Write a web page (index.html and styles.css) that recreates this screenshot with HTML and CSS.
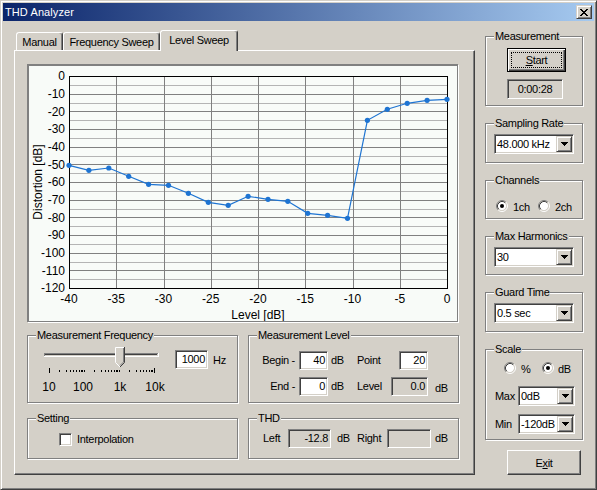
FILE: index.html
```html
<!DOCTYPE html>
<html>
<head>
<meta charset="utf-8">
<title>THD Analyzer</title>
<link rel="stylesheet" href="styles.css">
</head>
<body>
<div class="window">
  <div class="titlebar">
    <span class="title">THD Analyzer</span>
    <span class="close"><svg width="8" height="7" viewBox="0 0 8 7"><path d="M0 0h2v1h-2zM6 0h2v1h-2zM1 1h2v1h-2zM5 1h2v1h-2zM2 2h4v1h-4zM3 3h2v1h-2zM2 4h4v1h-4zM1 5h2v1h-2zM5 5h2v1h-2zM0 6h2v1h-2zM6 6h2v1h-2z" fill="#000"/></svg></span>
  </div>
  <div class="client">
    <div class="tabctl">
      <div class="tabstrip">
        <div class="tab tab-manual">Manual</div>
        <div class="tab tab-freq">Frequency Sweep</div>
        <div class="tab tab-level">Level Sweep</div>
      </div>
      <div class="panel">
        <div class="chart">
          <svg class="plot" width="428" height="255" viewBox="0 0 428 255">
            <g stroke="#b4b4b4" stroke-width="1">
              <path d="M40 19.5H418M40 37.5H418M40 54.5H418M40 72.5H418M40 90.5H418M40 107.5H418M40 125.5H418M40 143.5H418M40 160.5H418M40 178.5H418M40 196.5H418M40 213.5H418"/>
            </g>
            <g stroke="#808080" stroke-width="1">
              <path d="M40 28.5H418M40 45.5H418M40 63.5H418M40 81.5H418M40 98.5H418M40 116.5H418M40 134.5H418M40 151.5H418M40 169.5H418M40 187.5H418M40 204.5H418"/>
              <path d="M87.5 10V222M135.5 10V222M182.5 10V222M229.5 10V222M276.5 10V222M324.5 10V222M371.5 10V222"/>
            </g>
            <rect x="40.5" y="10.5" width="378" height="212" fill="none" stroke="#000"/>
            <polyline fill="none" stroke="#1e74d2" stroke-width="1.2" points="40,99.3 59.9,104.3 79.8,102 99.7,110.3 119.6,118.3 139.5,119.3 159.4,127.3 179.3,136.3 199.2,139.3 219.1,130.3 239,133.3 258.8,135.3 278.7,147.3 298.6,149.3 318.5,152.3 338.4,54.3 358.3,43.3 378.2,37.3 398.1,34.3 418,33.3"/>
            <g fill="#1e74d2">
              <circle cx="40" cy="99.3" r="2.6"/><circle cx="59.9" cy="104.3" r="2.6"/><circle cx="79.8" cy="102" r="2.6"/><circle cx="99.7" cy="110.3" r="2.6"/><circle cx="119.6" cy="118.3" r="2.6"/><circle cx="139.5" cy="119.3" r="2.6"/><circle cx="159.4" cy="127.3" r="2.6"/><circle cx="179.3" cy="136.3" r="2.6"/><circle cx="199.2" cy="139.3" r="2.6"/><circle cx="219.1" cy="130.3" r="2.6"/><circle cx="239" cy="133.3" r="2.6"/><circle cx="258.8" cy="135.3" r="2.6"/><circle cx="278.7" cy="147.3" r="2.6"/><circle cx="298.6" cy="149.3" r="2.6"/><circle cx="318.5" cy="152.3" r="2.6"/><circle cx="338.4" cy="54.3" r="2.6"/><circle cx="358.3" cy="43.3" r="2.6"/><circle cx="378.2" cy="37.3" r="2.6"/><circle cx="398.1" cy="34.3" r="2.6"/><circle cx="418" cy="33.3" r="2.6"/>
            </g>
            <g class="ax" text-anchor="end">
              <text x="36" y="14.3">0</text>
              <text x="36" y="32">-10</text>
              <text x="36" y="49.6">-20</text>
              <text x="36" y="67.3">-30</text>
              <text x="36" y="85">-40</text>
              <text x="36" y="102.6">-50</text>
              <text x="36" y="120.3">-60</text>
              <text x="36" y="138">-70</text>
              <text x="36" y="155.6">-80</text>
              <text x="36" y="173.3">-90</text>
              <text x="36" y="191">-100</text>
              <text x="36" y="208.6">-110</text>
              <text x="36" y="226.3">-120</text>
            </g>
            <g class="ax" text-anchor="middle">
              <text x="40" y="237">-40</text>
              <text x="87.25" y="237">-35</text>
              <text x="134.5" y="237">-30</text>
              <text x="181.75" y="237">-25</text>
              <text x="229" y="237">-20</text>
              <text x="276.25" y="237">-15</text>
              <text x="323.5" y="237">-10</text>
              <text x="370.75" y="237">-5</text>
              <text x="418" y="237">0</text>
              <text x="229" y="253">Level [dB]</text>
              <text transform="translate(12.5 116) rotate(-90)">Distortion [dB]</text>
            </g>
          </svg>
        </div>
        <div class="row row-a">
          <div class="group g-mf">
            <div class="gt">Measurement Frequency</div>
            <div class="mf-body">
              <svg class="slider" width="130" height="50" viewBox="0 0 130 50">
                <rect x="4" y="9" width="114" height="1" fill="#808080"/>
                <rect x="4" y="9" width="1" height="4" fill="#808080"/>
                <rect x="5" y="10" width="112" height="1" fill="#404040"/>
                <rect x="4" y="12" width="115" height="1" fill="#fff"/>
                <rect x="118" y="9" width="1" height="4" fill="#fff"/>
                <g fill="#000">
                  <rect x="9" y="24" width="1" height="5"/><rect x="19" y="26" width="1" height="2"/><rect x="26" y="26" width="1" height="2"/><rect x="30" y="26" width="1" height="2"/><rect x="33" y="26" width="1" height="2"/><rect x="36" y="26" width="1" height="2"/><rect x="39" y="26" width="1" height="2"/><rect x="41" y="26" width="1" height="2"/><rect x="42" y="26" width="1" height="2"/>
                  <rect x="44" y="26" width="1" height="2"/><rect x="54" y="26" width="1" height="2"/><rect x="61" y="26" width="1" height="2"/><rect x="65" y="26" width="1" height="2"/><rect x="68" y="26" width="1" height="2"/><rect x="71" y="26" width="1" height="2"/><rect x="74" y="26" width="1" height="2"/><rect x="76" y="26" width="1" height="2"/><rect x="77" y="26" width="1" height="2"/>
                  <rect x="79" y="26" width="1" height="2"/><rect x="89" y="26" width="1" height="2"/><rect x="96" y="26" width="1" height="2"/><rect x="100" y="26" width="1" height="2"/><rect x="103" y="26" width="1" height="2"/><rect x="106" y="26" width="1" height="2"/><rect x="109" y="26" width="1" height="2"/><rect x="111" y="26" width="1" height="2"/><rect x="112" y="26" width="1" height="2"/>
                  <rect x="114" y="24" width="1" height="5"/>
                </g>
                <polygon points="75,3 85,3 85,18 80,23 75,18" fill="#d4d0c8"/>
                <polyline points="75.5,18.5 75.5,3.5 84.5,3.5" fill="none" stroke="#fff"/>
                <polyline points="75.5,18.5 80,23" fill="none" stroke="#fff"/>
                <polyline points="84.5,3 84.5,18.5 80,23" fill="none" stroke="#404040"/>
                <polyline points="83.5,4 83.5,18 80,21.5" fill="none" stroke="#808080"/>
                <g class="sl-lbl" text-anchor="middle">
                  <text x="9" y="47">10</text>
                  <text x="43" y="47">100</text>
                  <text x="80" y="47">1k</text>
                  <text x="115" y="47">10k</text>
                </g>
              </svg>
              <div class="edit edit-freq">1000</div>
              <div class="hz">Hz</div>
            </div>
          </div>
          <div class="group g-ml">
            <div class="gt">Measurement Level</div>
            <div class="ml-grid">
              <div class="lbl-r">Begin -</div>
              <div class="edit w29">40</div>
              <div class="unit">dB</div>
              <div>Point</div>
              <div class="edit w29 end">20</div>
              <div></div>
              <div class="lbl-r">End -</div>
              <div class="edit w29">0</div>
              <div class="unit">dB</div>
              <div>Level</div>
              <div class="edit ro w37">0.0</div>
              <div class="db-low">dB</div>
            </div>
          </div>
        </div>
        <div class="row row-b">
          <div class="group g-set">
            <div class="gt">Setting</div>
            <div class="set-body">
              <div class="check"></div>
              <span class="chk-lbl">Interpolation</span>
            </div>
          </div>
          <div class="group g-thd">
            <div class="gt">THD</div>
            <div class="thd-body">
              <span class="t-left">Left</span>
              <div class="edit ro w43">-12.8</div>
              <span class="t-db1">dB</span>
              <span class="t-right">Right</span>
              <div class="edit ro w44"></div>
              <span class="t-db2">dB</span>
            </div>
          </div>
        </div>
      </div>
    </div>
    <div class="side">
      <div class="group g-meas">
        <div class="gt">Measurement</div>
        <div class="btn btn-start"><span class="focus"><span><u>S</u>tart</span></span></div>
        <div class="edit ro time">0:00:28</div>
      </div>
      <div class="group g-samp">
        <div class="gt">Sampling Rate</div>
        <div class="combo combo-wide"><span class="val">48.000 kHz</span><span class="dd"><svg width="7" height="4" viewBox="0 0 7 4"><path d="M0 0h7v1h-1v1h-1v1h-1v1h-1v-1h-1v-1h-1v-1h-1z" fill="#000"/></svg></span></div>
      </div>
      <div class="group g-chan">
        <div class="gt">Channels</div>
        <div class="radios radios-chan">
          <svg class="radio" width="12" height="12" viewBox="0 0 12 12"><circle cx="6" cy="6" r="4.2" fill="#fff"/><path d="M2.11 9.89A5.5 5.5 0 0 1 9.89 2.11" fill="none" stroke="#808080"/><path d="M9.89 2.11A5.5 5.5 0 0 1 2.11 9.89" fill="none" stroke="#fff"/><path d="M2.82 9.18A4.5 4.5 0 0 1 9.18 2.82" fill="none" stroke="#404040"/><path d="M9.18 2.82A4.5 4.5 0 0 1 2.82 9.18" fill="none" stroke="#d4d0c8"/><circle cx="6" cy="6" r="2" fill="#000"/></svg>
          <span class="rl rl-1ch">1ch</span>
          <svg class="radio" width="12" height="12" viewBox="0 0 12 12"><circle cx="6" cy="6" r="4.2" fill="#fff"/><path d="M2.11 9.89A5.5 5.5 0 0 1 9.89 2.11" fill="none" stroke="#808080"/><path d="M9.89 2.11A5.5 5.5 0 0 1 2.11 9.89" fill="none" stroke="#fff"/><path d="M2.82 9.18A4.5 4.5 0 0 1 9.18 2.82" fill="none" stroke="#404040"/><path d="M9.18 2.82A4.5 4.5 0 0 1 2.82 9.18" fill="none" stroke="#d4d0c8"/></svg>
          <span class="rl rl-2ch">2ch</span>
        </div>
      </div>
      <div class="group g-maxh">
        <div class="gt">Max Harmonics</div>
        <div class="combo combo-wide"><span class="val">30</span><span class="dd"><svg width="7" height="4" viewBox="0 0 7 4"><path d="M0 0h7v1h-1v1h-1v1h-1v1h-1v-1h-1v-1h-1v-1h-1z" fill="#000"/></svg></span></div>
      </div>
      <div class="group g-guard">
        <div class="gt">Guard Time</div>
        <div class="combo combo-wide"><span class="val">0.5 sec</span><span class="dd"><svg width="7" height="4" viewBox="0 0 7 4"><path d="M0 0h7v1h-1v1h-1v1h-1v1h-1v-1h-1v-1h-1v-1h-1z" fill="#000"/></svg></span></div>
      </div>
      <div class="group g-scale">
        <div class="gt">Scale</div>
        <div class="radios radios-scale">
          <svg class="radio" width="12" height="12" viewBox="0 0 12 12"><circle cx="6" cy="6" r="4.2" fill="#fff"/><path d="M2.11 9.89A5.5 5.5 0 0 1 9.89 2.11" fill="none" stroke="#808080"/><path d="M9.89 2.11A5.5 5.5 0 0 1 2.11 9.89" fill="none" stroke="#fff"/><path d="M2.82 9.18A4.5 4.5 0 0 1 9.18 2.82" fill="none" stroke="#404040"/><path d="M9.18 2.82A4.5 4.5 0 0 1 2.82 9.18" fill="none" stroke="#d4d0c8"/></svg>
          <span class="rl rl-pct">%</span>
          <svg class="radio" width="12" height="12" viewBox="0 0 12 12"><circle cx="6" cy="6" r="4.2" fill="#fff"/><path d="M2.11 9.89A5.5 5.5 0 0 1 9.89 2.11" fill="none" stroke="#808080"/><path d="M9.89 2.11A5.5 5.5 0 0 1 2.11 9.89" fill="none" stroke="#fff"/><path d="M2.82 9.18A4.5 4.5 0 0 1 9.18 2.82" fill="none" stroke="#404040"/><path d="M9.18 2.82A4.5 4.5 0 0 1 2.82 9.18" fill="none" stroke="#d4d0c8"/><circle cx="6" cy="6" r="2" fill="#000"/></svg>
          <span class="rl rl-db">dB</span>
        </div>
        <div class="srow srow-max">
          <span class="sl">Max</span>
          <div class="combo combo-sm"><span class="val">0dB</span><span class="dd"><svg width="7" height="4" viewBox="0 0 7 4"><path d="M0 0h7v1h-1v1h-1v1h-1v1h-1v-1h-1v-1h-1v-1h-1z" fill="#000"/></svg></span></div>
        </div>
        <div class="srow srow-min">
          <span class="sl">Min</span>
          <div class="combo combo-sm"><span class="val">-120dB</span><span class="dd"><svg width="7" height="4" viewBox="0 0 7 4"><path d="M0 0h7v1h-1v1h-1v1h-1v1h-1v-1h-1v-1h-1v-1h-1z" fill="#000"/></svg></span></div>
        </div>
      </div>
      <div class="btn btn-exit"><span>E<u>x</u>it</span></div>
    </div>
  </div>
</div>
</body>
</html>
```

FILE: styles.css
```css
* { box-sizing: border-box; }
html, body { margin: 0; padding: 0; }
body {
  width: 597px;
  height: 490px;
  overflow: hidden;
  background: #d4d0c8;
  font-family: "Liberation Sans", Arial, sans-serif;
  font-size: 11px;
  letter-spacing: -0.3px;
  color: #000;
}
.window {
  width: 597px;
  height: 490px;
  background: #d4d0c8;
  border: 1px solid;
  border-color: #d4d0c8 #404040 #404040 #d4d0c8;
  box-shadow: inset 1px 1px #fff, inset -1px -1px #808080;
  padding: 2px;
}
.titlebar {
  height: 18px;
  display: flex;
  align-items: center;
  padding: 0 2px;
  background: linear-gradient(to right, #0a246a, #a6caf0);
  color: #fff;
}
.title { line-height: 18px; letter-spacing: 0.1px; }
.close {
  margin-left: auto;
  width: 16px;
  height: 14px;
  background: #d4d0c8;
  border: 1px solid;
  border-color: #d4d0c8 #404040 #404040 #d4d0c8;
  box-shadow: inset 1px 1px #fff, inset -1px -1px #808080;
  display: flex;
  align-items: center;
  justify-content: center;
}
.close svg { display: block; }

.client { display: flex; padding: 9px 0 0 11px; }
.tabctl { width: 461px; }
.tabstrip {
  display: flex;
  align-items: flex-end;
  height: 20px;
  padding-left: 2px;
  position: relative;
  z-index: 1;
}
.tab {
  height: 18px;
  border: 1px solid;
  border-bottom: 0;
  border-color: #fff #404040 transparent #fff;
  box-shadow: inset -1px 0 #808080;
  border-radius: 3px 3px 0 0;
  text-align: center;
  padding-top: 3px;
  line-height: 13px;
  white-space: nowrap;
  background: #d4d0c8;
}
.tab-manual { width: 47px; }
.tab-freq { width: 97px; }
.tab-level { width: 78px; height: 21px; margin-bottom: -1px; }

.panel {
  height: 425px;
  border: 1px solid;
  border-color: #fff #404040 #404040 #fff;
  box-shadow: inset -1px -1px #808080;
  padding: 13px 0 0 12px;
}
.chart {
  width: 431px;
  height: 258px;
  border-style: solid;
  border-color: #808080;
  border-width: 2px 1px 1px 2px;
  background: #f8fbf8;
  box-shadow: 1px 1px #fff;
}
.chart svg { display: block; }
.ax text, .sl-lbl text {
  font-family: "Liberation Sans", Arial, sans-serif;
  font-size: 12px;
  letter-spacing: 0;
  fill: #000;
}

.row { display: flex; gap: 10px; }
.row-a { margin-top: 13px; }
.row-b { margin-top: 15px; }
.group {
  border: 1px solid #808080;
  box-shadow: inset 1px 1px #fff, 1px 1px #fff;
}
.gt {
  width: fit-content;
  margin: -7px 0 0 8px;
  padding: 0 1px;
  background: #d4d0c8;
  line-height: 13px;
  white-space: nowrap;
}
.g-mf, .g-ml { width: 211px; height: 68px; }
.g-set, .g-thd { width: 211px; height: 41px; }

.edit {
  height: 19px;
  background: #fff;
  border: 1px solid;
  border-color: #808080 #fff #fff #808080;
  box-shadow: inset 1px 1px #404040, inset -1px -1px #d4d0c8;
  text-align: right;
  padding: 0 2px;
  line-height: 17px;
  white-space: nowrap;
}
.edit.ro { background: #d4d0c8; }

.mf-body { display: flex; align-items: flex-start; padding: 2px 0 0 12px; }
.slider { display: block; }
.edit-freq { width: 33px; margin: 6px 0 0 5px; }
.hz { margin: 10px 0 0 5px; line-height: 13px; }

.ml-grid {
  display: grid;
  grid-template-columns: 50px 29px 29px 34px 37px auto;
  grid-template-rows: 19px 19px;
  row-gap: 7px;
  margin-top: 9px;
  line-height: 19px;
}
.lbl-r { text-align: right; padding-right: 4px; }
.unit { padding-left: 3px; }
.w29 { width: 29px; }
.w37 { width: 37px; }
.end { justify-self: end; }
.db-low { padding: 2px 0 0 7px; }

.set-body { display: flex; align-items: flex-start; margin-top: 8px; padding-left: 31px; }
.check {
  width: 13px;
  height: 13px;
  background: #fff;
  border: 1px solid;
  border-color: #808080 #fff #fff #808080;
  box-shadow: inset 1px 1px #404040, inset -1px -1px #d4d0c8;
}
.chk-lbl { margin-left: 5px; line-height: 13px; }

.thd-body { display: flex; align-items: center; margin-top: 4px; padding-left: 14px; height: 19px; line-height: 19px; }
.t-left { width: 25px; }
.w43 { width: 43px; }
.w44 { width: 44px; }
.t-db1 { width: 26px; padding-left: 6px; }
.t-right { width: 30px; }
.t-db2 { padding-left: 4px; }

.side { width: 98px; margin-left: 10px; padding-top: 6px; }
.side .group { width: 98px; }
.side .group + .group { margin-top: 17px; }
.g-meas { height: 70px; }
.g-samp { height: 40px; }
.g-chan { height: 39px; }
.g-maxh { height: 39px; }
.g-guard { height: 40px; }
.g-scale { height: 91px; }

.btn {
  background: #d4d0c8;
  border: 1px solid;
  border-color: #fff #404040 #404040 #fff;
  box-shadow: inset -1px -1px #808080;
  display: flex;
  align-items: center;
  justify-content: center;
  white-space: nowrap;
}
.btn-start {
  width: 59px;
  height: 24px;
  margin: 5px 0 0 21px;
  border-color: #000;
  box-shadow: inset 1px 1px #fff, inset -1px -1px #404040, inset -2px -2px #808080;
  padding: 3px;
}
.focus {
  flex: 1;
  align-self: stretch;
  border: 1px dotted #000;
  display: flex;
  align-items: center;
  justify-content: center;
}
.time { width: 56px; height: 20px; margin: 7px 0 0 21px; text-align: center; line-height: 18px; }
.btn-exit { width: 74px; height: 25px; margin: 10px 0 0 22px; }

.combo {
  display: flex;
  align-items: center;
  height: 20px;
  background: #fff;
  border: 1px solid;
  border-color: #808080 #fff #fff #808080;
  box-shadow: inset 1px 1px #404040, inset -1px -1px #d4d0c8;
  padding: 1px;
}
.combo .val { flex: 1; padding-left: 1px; line-height: 16px; white-space: nowrap; overflow: hidden; }
.combo .dd {
  width: 16px;
  height: 16px;
  flex: none;
  background: #d4d0c8;
  border: 1px solid;
  border-color: #d4d0c8 #404040 #404040 #d4d0c8;
  box-shadow: inset 1px 1px #fff, inset -1px -1px #808080;
  display: flex;
  align-items: center;
  justify-content: center;
}
.combo .dd svg { display: block; }
.combo-wide { width: 80px; margin: 4px 0 0 8px; }
.combo-sm { width: 57px; }

.radios { display: flex; align-items: flex-start; }
.radio { display: block; flex: none; }
.rl { line-height: 13px; margin-top: 1px; }
.radios-chan { margin-top: 13px; padding-left: 10px; }
.rl-1ch { width: 25px; margin-left: 5px; }
.rl-2ch { margin-left: 5px; }
.radios-scale { margin-top: 6px; padding-left: 18px; }
.rl-pct { width: 21px; margin-left: 5px; }
.rl-db { margin-left: 4px; }

.srow { display: flex; align-items: center; padding-left: 9px; line-height: 20px; }
.srow .sl { width: 23px; }
.srow-max { margin-top: 10px; }
.srow-min { margin-top: 8px; }
```
